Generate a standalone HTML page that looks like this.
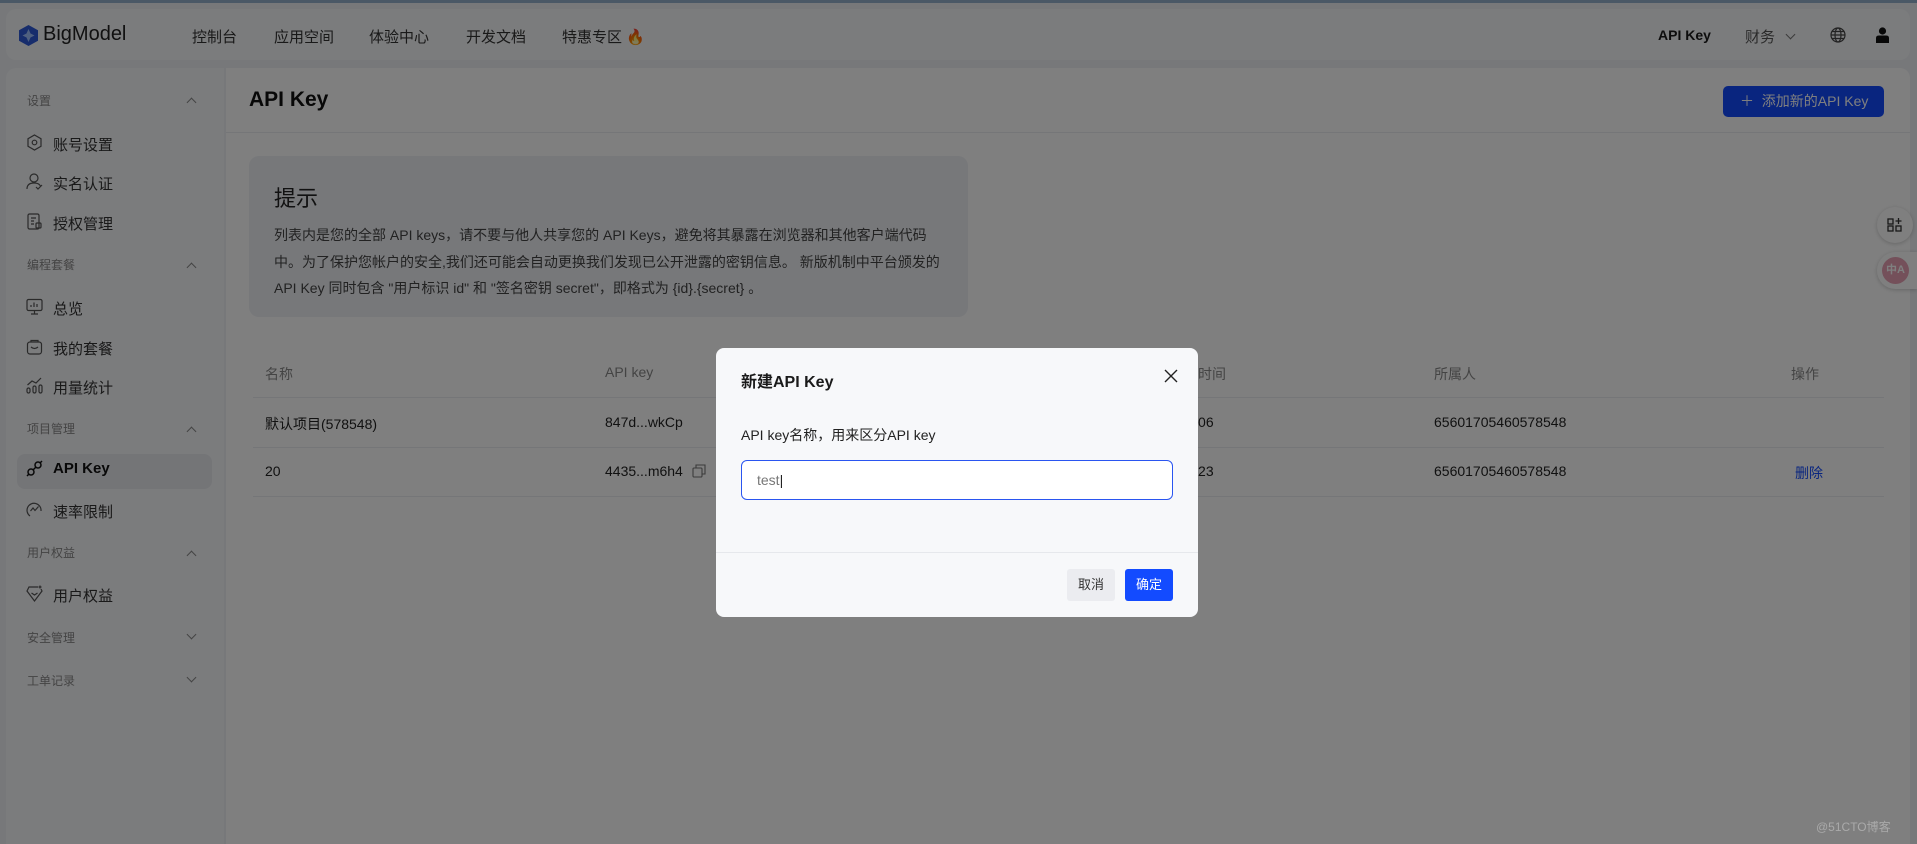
<!DOCTYPE html>
<html style="width:1917px;height:844px;overflow:hidden"><head><meta charset="utf-8"><style>
*{margin:0;padding:0;box-sizing:border-box}
body{width:1917px;height:844px;overflow:hidden;background:#eef0f4;font-family:"Liberation Sans","Noto Sans CJK SC",sans-serif;color:#1a1a1a;position:relative}
.a{position:absolute;white-space:nowrap}
.topline{position:absolute;left:0;top:0;width:1917px;height:3px;background:#94b0cc}
.bar{position:absolute;left:6px;top:9px;width:1904px;height:51px;background:#f7f8fa;border-radius:10px}
.side{position:absolute;left:6px;top:68px;width:218px;height:776px;background:#f7f8fb;border-radius:10px 0 0 0}
.main{position:absolute;left:226px;top:68px;width:1684px;height:776px;background:#fff;border-radius:0 10px 0 0}
.nav{font-size:15px;color:#333}
.st{font-size:12px;color:#888}
.it{font-size:15px;color:#333}
.chev{position:absolute;width:7px;height:7px;border-left:1.3px solid #888;border-top:1.3px solid #888}
.up{transform:rotate(45deg)}
.dn{transform:rotate(225deg)}
.ic{position:absolute;width:17px;height:17px}
.th{font-size:14px;color:#888}
.td{font-size:14px;color:#222}
.hr{position:absolute;height:1px;background:#ebedf0}
.mask{position:absolute;left:0;top:0;width:1917px;height:844px;background:rgba(0,0,0,0.5)}
.modal{position:absolute;left:716px;top:348px;width:482px;height:269px;background:#f7f8fa;border-radius:8px}
</style></head><body>
<div class="topline"></div>
<div class="bar"></div>
<svg class="a" style="left:19px;top:25px" width="19" height="21" viewBox="0 0 19 21"><path d="M9.5 0L19 5.3V15.7L9.5 21L0 15.7V5.3Z" fill="#2f5bd8"/><path d="M9.5 4L11.5 8.5L15.5 10.5L11.5 12.5L9.5 17L7.5 12.5L3.5 10.5L7.5 8.5Z" fill="#9fc0ff"/></svg>
<div class="a" style="left:43px;top:23px;font-size:20px;font-weight:500;color:#222">BigModel</div>
<div class="a nav" style="left:192px;top:26px">控制台</div>
<div class="a nav" style="left:274px;top:26px">应用空间</div>
<div class="a nav" style="left:369px;top:26px">体验中心</div>
<div class="a nav" style="left:466px;top:26px">开发文档</div>
<div class="a nav" style="left:562px;top:26px">特惠专区 <span style="color:#f06a1a">🔥</span></div>
<div class="a" style="left:1658px;top:27px;font-size:14px;font-weight:bold">API Key</div>
<div class="a nav" style="left:1745px;top:26px;color:#555">财务</div>
<div class="chev dn" style="left:1787px;top:31px;border-color:#777"></div>
<svg class="a" style="left:1830px;top:27px" width="16" height="16" viewBox="0 0 16 16" fill="none" stroke="#444" stroke-width="1.2"><circle cx="8" cy="8" r="7"/><ellipse cx="8" cy="8" rx="3" ry="7"/><path d="M1 8H15M2 4.5H14M2 11.5H14"/></svg>
<svg class="a" style="left:1876px;top:27px" width="13" height="16" viewBox="0 0 13 16"><circle cx="6.5" cy="4" r="3.6" fill="#111"/><path d="M0 16V11Q0 8.5 3 8.5H10Q13 8.5 13 11V16Z" fill="#111"/></svg>

<div class="side"></div>
<div class="main"></div>
<div class="a st" style="left:27px;top:92px">设置</div><div class="chev up" style="left:188px;top:99px"></div>
<svg class="ic" style="left:26px;top:134px" viewBox="0 0 17 17" fill="none" stroke="#555" stroke-width="1.2"><path d="M8.5 1L15 4.7V12.3L8.5 16L2 12.3V4.7Z"/><circle cx="8.5" cy="8.5" r="2.3"/></svg>
<div class="a it" style="left:53px;top:134px">账号设置</div>
<svg class="ic" style="left:26px;top:173px" viewBox="0 0 17 17" fill="none" stroke="#555" stroke-width="1.2"><circle cx="8" cy="5" r="4"/><path d="M1 16Q1 10 8 10Q13 10 14.5 13M10 14L12 16L16 12"/></svg>
<div class="a it" style="left:53px;top:173px">实名认证</div>
<svg class="ic" style="left:26px;top:213px" viewBox="0 0 17 17" fill="none" stroke="#555" stroke-width="1.2"><rect x="2" y="1" width="11" height="15" rx="1.5"/><path d="M5 5H10M5 8H8M5 11H8"/><rect x="10" y="10" width="5" height="5" rx="1"/></svg>
<div class="a it" style="left:53px;top:213px">授权管理</div>
<div class="a st" style="left:27px;top:256px">编程套餐</div><div class="chev up" style="left:188px;top:264px"></div>
<svg class="ic" style="left:26px;top:298px" viewBox="0 0 17 17" fill="none" stroke="#555" stroke-width="1.2"><rect x="1" y="1.5" width="15" height="11" rx="1.5"/><path d="M5 16H12M8.5 12.5V16M5 9V7M8 9V4.5M11 9V6"/></svg>
<div class="a it" style="left:53px;top:298px">总览</div>
<svg class="ic" style="left:26px;top:338px" viewBox="0 0 17 17" fill="none" stroke="#555" stroke-width="1.2"><rect x="1.5" y="4" width="14" height="12" rx="2.5"/><path d="M5 4V2.5H12V4M5 9Q8.5 12 12 9"/></svg>
<div class="a it" style="left:53px;top:338px">我的套餐</div>
<svg class="ic" style="left:26px;top:377px" viewBox="0 0 17 17" fill="none" stroke="#555" stroke-width="1.2"><rect x="1" y="11" width="3" height="5" rx="1.5"/><rect x="7" y="9" width="3" height="7" rx="1.5"/><rect x="13" y="8" width="3" height="8" rx="1.5"/><path d="M1.5 8L6 4L10 6L15 1"/></svg>
<div class="a it" style="left:53px;top:377px">用量统计</div>
<div class="a st" style="left:27px;top:420px">项目管理</div><div class="chev up" style="left:188px;top:428px"></div>
<div class="a" style="left:17px;top:454px;width:195px;height:35px;background:#e9eaee;border-radius:8px"></div>
<svg class="ic" style="left:26px;top:460px" viewBox="0 0 17 17" fill="none" stroke="#111" stroke-width="1.5"><circle cx="5" cy="12" r="3"/><circle cx="12" cy="5" r="3"/><path d="M7 10L10 7M1 16L3 14M14 3L16 1"/></svg>
<div class="a it" style="left:53px;top:460px;font-weight:bold;color:#111">API Key</div>
<svg class="ic" style="left:26px;top:501px" viewBox="0 0 17 17" fill="none" stroke="#555" stroke-width="1.2"><path d="M4 15A7 7 0 1 1 15 10"/><path d="M4.5 10L7 7L9 9.5L12.5 5.5"/></svg>
<div class="a it" style="left:53px;top:501px">速率限制</div>
<div class="a st" style="left:27px;top:544px">用户权益</div><div class="chev up" style="left:188px;top:552px"></div>
<svg class="ic" style="left:26px;top:585px" viewBox="0 0 17 17" fill="none" stroke="#555" stroke-width="1.2"><path d="M12 2H3L1 6L8.5 16L16 6L15 4M5.5 8L8.5 10L11.5 8M14 0.5V3.5M12.5 2H15.5"/></svg>
<div class="a it" style="left:53px;top:585px">用户权益</div>
<div class="a st" style="left:27px;top:629px">安全管理</div><div class="chev dn" style="left:188px;top:631px"></div>
<div class="a st" style="left:27px;top:672px">工单记录</div><div class="chev dn" style="left:188px;top:674px"></div>

<div class="a" style="left:249px;top:88px;font-size:21px;font-weight:bold;color:#111">API Key</div>
<div class="hr" style="left:226px;top:132px;width:1684px"></div>
<div class="a" style="left:1723px;top:86px;width:161px;height:31px;background:#134bff;border-radius:5px;color:#fff;font-size:14px;line-height:31px;padding-left:17px">＋&nbsp; 添加新的API Key</div>
<div class="a" style="left:249px;top:156px;width:719px;height:161px;background:#eef0f5;border-radius:10px"></div>
<div class="a" style="left:274px;top:181px;font-size:22px;color:#222">提示</div>
<div class="a" style="left:274px;top:222px;font-size:14px;line-height:26.5px;color:#444;white-space:normal;width:680px">列表内是您的全部 API keys，请不要与他人共享您的 API Keys，避免将其暴露在浏览器和其他客户端代码中。为了保护您帐户的安全,我们还可能会自动更换我们发现已公开泄露的密钥信息。 新版机制中平台颁发的 API Key 同时包含 "用户标识 id" 和 "签名密钥 secret"，即格式为 {id}.{secret} 。</div>
<div class="a th" style="left:265px;top:364px">名称</div>
<div class="a th" style="left:605px;top:364px">API key</div>
<div class="a th" style="left:1170px;top:364px">创建时间</div>
<div class="a th" style="left:1434px;top:364px">所属人</div>
<div class="a th" style="left:1791px;top:364px">操作</div>
<div class="hr" style="left:253px;top:397px;width:1631px"></div>
<div class="a td" style="left:265px;top:414px">默认项目(578548)</div>
<div class="a td" style="left:605px;top:414px">847d...wkCp</div>
<div class="a td" style="left:1142px;top:414px">2025-01-06</div>
<div class="a td" style="left:1434px;top:414px">65601705460578548</div>
<div class="hr" style="left:253px;top:447px;width:1631px"></div>
<div class="a td" style="left:265px;top:463px">20</div>
<div class="a td" style="left:605px;top:463px">4435...m6h4</div>
<svg class="a" style="left:692px;top:464px" width="14" height="14" viewBox="0 0 14 14" fill="none" stroke="#777" stroke-width="1.1"><rect x="1" y="4" width="9" height="9" rx="1"/><path d="M4 4V1H13V10H10"/></svg>
<div class="a td" style="left:1142px;top:463px">2025-01-23</div>
<div class="a td" style="left:1434px;top:463px">65601705460578548</div>
<div class="a td" style="left:1795px;top:463px;color:#134bff">删除</div>
<div class="hr" style="left:253px;top:496px;width:1631px"></div>

<div class="a" style="left:1877px;top:207px;width:36px;height:36px;border-radius:50%;background:#fff;box-shadow:0 1px 4px rgba(0,0,0,.2)"></div>
<svg class="a" style="left:1887px;top:217px" width="16" height="16" viewBox="0 0 16 16" fill="none" stroke="#333" stroke-width="1.3"><rect x="1" y="2" width="5" height="5"/><rect x="1" y="9" width="5" height="5"/><rect x="9" y="9" width="5" height="5"/><path d="M11.5 1V7M8.5 4H14.5"/></svg>
<div class="a" style="left:1877px;top:252px;width:40px;height:37px;border-radius:19px 0 0 19px;background:#fff;box-shadow:0 1px 4px rgba(0,0,0,.2)"></div>
<div class="a" style="left:1882px;top:257px;width:27px;height:27px;border-radius:50%;background:#e8a0b4;color:#fff;font-size:11px;font-weight:bold;line-height:27px;text-align:center">中A</div>

<div class="mask"></div>
<div class="a" style="left:1816px;top:818px;font-size:12px;color:#aaa">@51CTO博客</div>

<div class="modal">
<div class="a" style="left:25px;top:20px;font-size:16px;font-weight:bold;color:#1a1a1a">新建API Key</div>
<svg class="a" style="left:448px;top:21px" width="14" height="14" viewBox="0 0 14 14" stroke="#222" stroke-width="1.4"><path d="M1 1L13 13M13 1L1 13"/></svg>
<div class="a" style="left:25px;top:77px;font-size:14px;color:#222">API key名称，用来区分API key</div>
<div class="a" style="left:25px;top:112px;width:432px;height:40px;background:#fff;border:1px solid #2a55f0;border-radius:6px;font-size:14px;color:#777;line-height:38px;padding-left:15px">test<span style="color:#222">|</span></div>
<div class="a" style="left:0;top:204px;width:482px;height:1px;background:#e6e8ec"></div>
<div class="a" style="left:351px;top:221px;width:48px;height:32px;background:#ebecf0;border-radius:3px;font-size:13px;color:#333;line-height:32px;text-align:center">取消</div>
<div class="a" style="left:409px;top:221px;width:48px;height:32px;background:#134bff;border-radius:3px;font-size:13px;color:#fff;line-height:32px;text-align:center">确定</div>
</div>
</body></html>
